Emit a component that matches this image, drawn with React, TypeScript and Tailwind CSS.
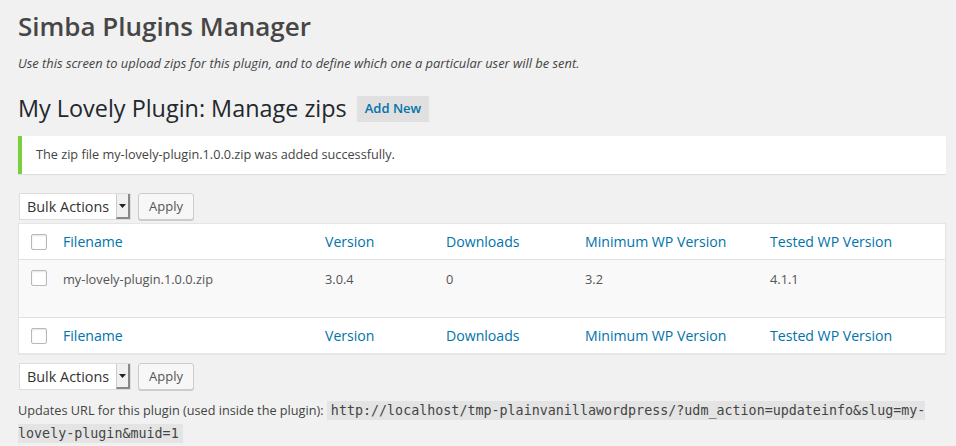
import React from 'react';

const columns = [
    { key: 'filename', label: 'Filename' },
    { key: 'version', label: 'Version' },
    { key: 'downloads', label: 'Downloads' },
    { key: 'minwp', label: 'Minimum WP Version' },
    { key: 'testedwp', label: 'Tested WP Version' },
];

const zips = [
    { filename: 'my-lovely-plugin.1.0.0.zip', version: '3.0.4', downloads: '0', minwp: '3.2', testedwp: '4.1.1' },
];

const gridCols = 'grid grid-cols-[34px_262px_121px_139px_185px_1fr]';

const Checkbox: React.FC = () => (
    <span className="block w-4 h-4 bg-white border border-[#b4b9be] rounded-[2px] shadow-[inset_0_1px_2px_rgba(0,0,0,0.1)]" />
);

const BulkActions: React.FC = () => (
    <div className="flex items-center gap-[7px]">
        <div className="flex items-stretch h-[27px] w-[112px] bg-white border border-[#ddd]">
            <span className="flex-1 flex items-center pl-[7px] text-[14.4px] text-[#333]">Bulk Actions</span>
            <span className="w-[14px] flex items-center justify-center bg-[#f0f0f0] border-l border-[#ccc] border-r-2 border-b-2 border-r-[#888] border-b-[#888]">
                <svg width="7" height="4" viewBox="0 0 7 4">
                    <path d="M0 0h7L3.5 4z" fill="#222" />
                </svg>
            </span>
        </div>
        <button className="h-[27px] px-[10px] text-[13px] text-[#555] bg-[#f7f7f7] border border-[#ccc] rounded-[3px] shadow-[0_1px_0_#ccc]">
            Apply
        </button>
    </div>
);

const HeaderRow: React.FC<{ border: 'top' | 'bottom' }> = ({ border }) => (
    <div className={`${gridCols} h-[36px] items-center bg-white ${border === 'bottom' ? 'border-b' : 'border-t'} border-[#e1e1e1]`}>
        <div className="pl-[12px]"><Checkbox /></div>
        {columns.map(c => (
            <div key={c.key} className="pl-[10px] text-[14.1px] text-[#0073aa]">{c.label}</div>
        ))}
    </div>
);

export default function App() {
    return (
        <div className="min-h-screen bg-[#f1f1f1] pl-[18px] pr-[10px] pt-[8px] pb-[4px] text-[12.7px] text-[#444] font-['Open_Sans',sans-serif]">
            <h1 className="text-[26px] leading-[36px] font-semibold text-[#464646]">Simba Plugins Manager</h1>
            <p className="mt-[10px] italic text-[12.9px] leading-[18px]">
                Use this screen to upload zips for this plugin, and to define which one a particular user will be sent.
            </p>

            <div className="mt-[22px] flex items-center gap-[10px]">
                <h2 className="text-[23.4px] leading-[29px] text-[#23282d]">My Lovely Plugin: Manage zips</h2>
                <span className="h-[26px] px-[8px] flex items-center bg-[#e0e0e0] text-[13px] font-semibold text-[#0073aa]">
                    Add New
                </span>
            </div>

            <div className="mt-[13px] h-[38px] flex items-center pl-[14px] bg-white border-l-4 border-[#7ad03a] shadow-[0_1px_1px_rgba(0,0,0,0.08)]">
                The zip file my-lovely-plugin.1.0.0.zip was added successfully.
            </div>

            <div className="mt-[19px] pl-px">
                <BulkActions />
            </div>

            <div className="mt-[3px] bg-white border border-[#e5e5e5] shadow-[0_1px_1px_rgba(0,0,0,0.04)]">
                <HeaderRow border="bottom" />
                {zips.map(z => (
                    <div key={z.filename} className={`${gridCols} h-[57px] items-start pt-[10px] bg-[#f9f9f9] text-[12.8px] text-[#555]`}>
                        <div className="pl-[12px]"><Checkbox /></div>
                        <div className="pl-[10px]">{z.filename}</div>
                        <div className="pl-[10px]">{z.version}</div>
                        <div className="pl-[10px]">{z.downloads}</div>
                        <div className="pl-[10px]">{z.minwp}</div>
                        <div className="pl-[10px]">{z.testedwp}</div>
                    </div>
                ))}
                <HeaderRow border="top" />
            </div>

            <div className="mt-[9px] pl-px">
                <BulkActions />
            </div>

            <p className="mt-[9px] leading-[22px] max-w-[920px]">
                Updates URL for this plugin (used inside the plugin):{' '}
                <code className="bg-[#e4e4e4] px-[4px] py-[2px] text-[13.35px] text-[#444] font-['DejaVu_Sans_Mono',monospace]">
                    http://localhost/tmp-plainvanillawordpress/?udm_action=updateinfo&amp;slug=my-lovely-plugin&amp;muid=1
                </code>
            </p>
        </div>
    );
}
